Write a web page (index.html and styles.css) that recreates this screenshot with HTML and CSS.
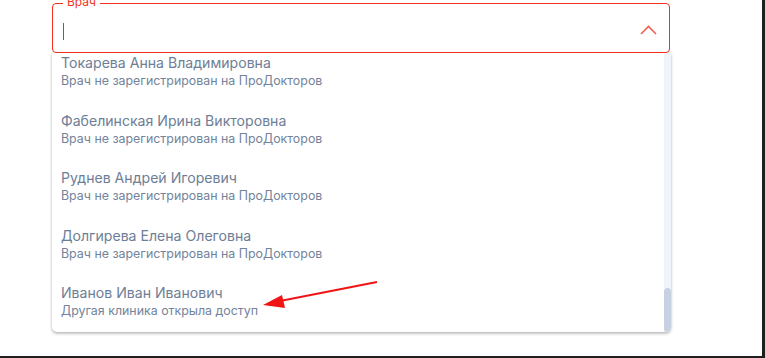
FILE: index.html
```html
<!DOCTYPE html>
<html lang="ru">
<head>
<meta charset="utf-8">
<link rel="stylesheet" href="styles.css">
</head>
<body>
<div class="frame">
  <div class="select">
    <div class="field">
      <span class="label">Врач</span>
      <span class="caret"></span>
      <span class="grow"></span>
      <svg class="chevron" width="17" height="10" viewBox="0 0 17 10"><path d="M1 9 L8.5 1.5 L16 9" fill="none" stroke="#f2604f" stroke-width="1.6"/></svg>
    </div>
    <div class="dropdown">
      <div class="viewport">
        <ul class="list">
          <li class="item"><div class="name">Токарева Анна Владимировна</div><div class="sub">Врач не зарегистрирован на ПроДокторов</div></li>
          <li class="item"><div class="name">Фабелинская Ирина Викторовна</div><div class="sub">Врач не зарегистрирован на ПроДокторов</div></li>
          <li class="item"><div class="name">Руднев Андрей Игоревич</div><div class="sub">Врач не зарегистрирован на ПроДокторов</div></li>
          <li class="item"><div class="name">Долгирева Елена Олеговна</div><div class="sub">Врач не зарегистрирован на ПроДокторов</div></li>
          <li class="item"><div class="name">Иванов Иван Иванович</div><div class="sub">Другая клиника открыла доступ</div></li>
        </ul>
      </div>
      <div class="track"><div class="thumb"></div></div>
    </div>
  </div>
  <svg class="annot" width="765" height="358" viewBox="0 0 765 358">
    <line x1="377" y1="282" x2="280" y2="301" stroke="#f01414" stroke-width="2"/>
    <polygon points="263,305 282,295 285,308" fill="#f01414"/>
  </svg>
</div>
</body>
</html>
```

FILE: styles.css
```css
html, body { margin: 0; padding: 0; background: #fff; }
body { font-family: Inter, Roboto, "Noto Sans", sans-serif; }
.frame {
  position: relative;
  width: 762px;
  height: 356px;
  border-right: 3px solid #1f1f1f;
  border-bottom: 2px solid #1f1f1f;
  overflow: hidden;
}
.select {
  width: 619px;
  margin: 3px 0 0 52px;
  display: flex;
  flex-direction: column;
}
.field {
  position: relative;
  height: 50px;
  box-sizing: border-box;
  border: 1.5px solid #f2321e;
  border-radius: 4px;
  display: flex;
  align-items: center;
  padding: 0 12px 0 10px;
  margin-right: 1px;
}
.label {
  position: absolute;
  left: 10px;
  top: -9px;
  padding: 0 4px;
  background: #fff;
  color: #f2321e;
  font-size: 12px;
  line-height: 14px;
}
.caret {
  width: 1px;
  height: 17px;
  background: #e8321e;
  margin-top: 6px;
}
.grow { flex: 1; }
.chevron { display: block; margin-top: 3px; }
.dropdown {
  height: 279px;
  display: flex;
  background: #fff;
  border-radius: 0 0 5px 5px;
  box-shadow: 0 2px 3px rgba(0,0,0,0.22), 0 0 3px rgba(0,0,0,0.12);
  overflow: hidden;
}
.viewport { flex: 1; overflow: hidden; }
.list {
  list-style: none;
  margin: -10px 0 0 0;
  padding: 0;
}
.item {
  height: 57.5px;
  box-sizing: border-box;
  padding: 10px 9px 0 9px;
  color: #6e7e96;
}
.name { font-size: 14.1px; line-height: 20px; }
.sub { font-size: 12.4px; line-height: 16px; color: #73839a; }
.track {
  width: 7px;
  background: #eff3fa;
  display: flex;
  flex-direction: column;
  justify-content: flex-end;
}
.thumb {
  height: 44px;
  background: #c6d1e1;
  border-radius: 4px;
}
.annot { position: absolute; left: 0; top: 0; pointer-events: none; }
```
